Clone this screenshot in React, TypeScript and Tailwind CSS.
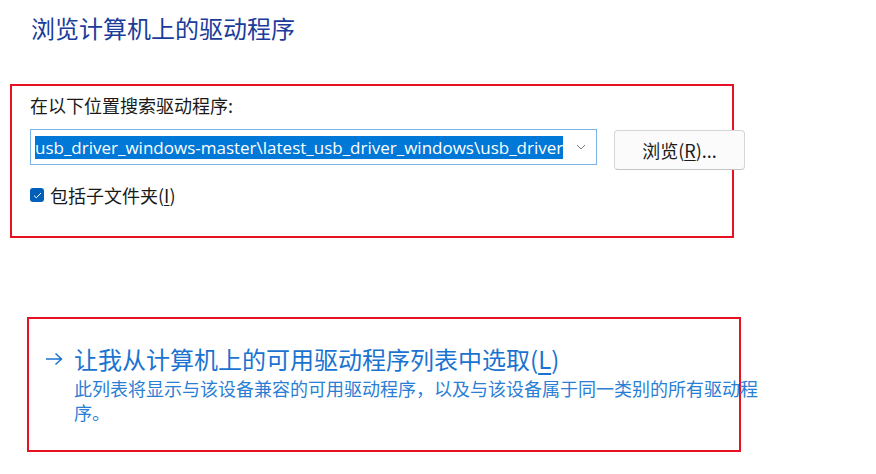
import { useState } from "react";

const cjk = "font-['Noto_Sans_CJK_SC','Noto_Sans',sans-serif]";
const PATH = "usb_driver_windows-master\\latest_usb_driver_windows\\usb_driver";

function Chevron() {
  return (
    <svg width="10" height="6" viewBox="0 0 10 6" fill="none" className="shrink-0">
      <path d="M1 1l4 4 4-4" stroke="#7a7a7a" strokeWidth="1" />
    </svg>
  );
}

function Arrow() {
  return (
    <svg width="18" height="14" viewBox="0 0 18 14" fill="none" className="shrink-0">
      <path d="M1 7h15.5M10.5 1.5l6 5.5-6 5.5" stroke="#1a73d0" strokeWidth="1.5" />
    </svg>
  );
}

export default function App() {
  const [includeSub, setIncludeSub] = useState(true);

  return (
    <div className={`h-[474px] w-[876px] overflow-hidden bg-white ${cjk}`}>
      <h1 className="pl-[31px] pt-[12px] text-[24px] font-normal leading-[32px] text-[#1b3c9b]">
        浏览计算机上的驱动程序
      </h1>

      {/* search location */}
      <div className="ml-[10px] mt-[40px] h-[154px] w-[724px] border-2 border-[#e81123] pl-[18px] pt-[7px]">
        <p className="text-[18px] leading-[24px] text-[#1a1a1a]">在以下位置搜索驱动程序:</p>
        <div className="mt-[12px] flex items-start gap-[17px]">
          <div className="flex h-[36px] w-[567px] shrink-0 items-center border border-[#7ab4e8] bg-white pl-[4px] pr-[10px]">
            <div className="min-w-0 flex-1 overflow-hidden whitespace-nowrap">
              <span className="bg-[#0078d7] font-['Open_Sans',sans-serif] text-[17px] leading-[27px] text-white">
                {PATH}
              </span>
            </div>
            <Chevron />
          </div>
          <button
            type="button"
            className="mt-[1px] h-[40px] w-[131px] shrink-0 rounded-[4px] border border-[#d6d6d6] border-b-[#c4c4c4] bg-[#fbfbfb] text-[18px] leading-[24px] text-[#1a1a1a]"
          >
            浏览(<span className="underline underline-offset-2">R</span>)...
          </button>
        </div>
        <label className="mt-[13px] flex items-center gap-[6px] text-[18px] leading-[24px] text-[#1a1a1a]">
          <button
            type="button"
            role="checkbox"
            aria-checked={includeSub}
            onClick={() => setIncludeSub(!includeSub)}
            className={`flex size-[14px] items-center justify-center rounded-[3px] ${
              includeSub ? "bg-[#005fb8]" : "border border-[#8a8a8a] bg-white"
            }`}
          >
            {includeSub && (
              <svg width="9" height="7" viewBox="0 0 9 7" fill="none">
                <path d="M1 3.6l2.3 2.2L8 1" stroke="white" strokeWidth="1" />
              </svg>
            )}
          </button>
          <span>
            包括子文件夹(<span className="underline underline-offset-2">I</span>)
          </span>
        </label>
      </div>

      {/* pick from list */}
      <div className="ml-[27px] mt-[79px] h-[135px] w-[714px] border-2 border-[#e81123] pl-[16px] pt-[24px]">
        <div className="flex items-center gap-[11px]">
          <Arrow />
          <span className="text-[24px] leading-[32px] text-[#1a73d0]">
            让我从计算机上的可用驱动程序列表中选取(<span className="underline underline-offset-4">L</span>)
          </span>
        </div>
        <p className="ml-[29px] mt-[1px] w-[700px] text-[18px] leading-[24px] text-[#2a7fd4]">
          此列表将显示与该设备兼容的可用驱动程序，以及与该设备属于同一类别的所有驱动程序。
        </p>
      </div>
    </div>
  );
}
